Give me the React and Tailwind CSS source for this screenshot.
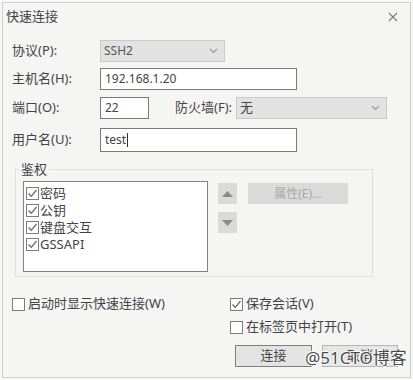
import React from 'react';

const font = { fontFamily: '"Noto Sans", "Noto Sans CJK SC", sans-serif' };

const Check = ({ checked, className = '' }) => (
  <span className={`flex h-[13px] w-[13px] shrink-0 items-center justify-center border border-[#7d7d7d] bg-white ${className}`}>
    {checked && (
      <svg width="11" height="11" viewBox="0 0 11 11">
        <path d="M1.5 5.5 L4.3 8.3 L9.5 2" fill="none" stroke="#6a6a6a" strokeWidth="1.3" />
      </svg>
    )}
  </span>
);

const Chevron = () => (
  <svg width="9" height="6" viewBox="0 0 9 6">
    <path d="M1 1 L4.5 4.5 L8 1" fill="none" stroke="#9a9a9a" strokeWidth="1.2" />
  </svg>
);

const Row = ({ label, children, className = '' }) => (
  <div className={`flex items-center pl-[9px] ${className}`}>
    <span className="w-[88px] text-[13px] text-[#444]">{label}</span>
    {children}
  </div>
);

const authItems = ['密码', '公钥', '键盘交互', 'GSSAPI'];

export default function App() {
  return (
    <div className="h-[380px] w-[413px] bg-[#f6f6f5] px-[2px] pt-[2px] text-[#333]" style={font}>
      <div className="flex h-[376px] flex-col border border-[#cfcfcf] bg-[#f5f5f4]">
        <div className="flex h-[28px] shrink-0 items-center justify-between pl-[3px] pr-[12px]">
          <span className="text-[13px] text-[#444]">快速连接</span>
          <svg width="10" height="10" viewBox="0 0 10 10">
            <path d="M1 1 L9 9 M9 1 L1 9" stroke="#7a7a7a" strokeWidth="1.1" />
          </svg>
        </div>

        <Row label="协议(P):" className="mt-[9px] h-[22px]">
          <div className="flex h-[22px] w-[125px] items-center justify-between border border-[#cacaca] bg-[#e2e2e2] pl-[3px] pr-[6px]">
            <span className="text-[12px] text-[#555]">SSH2</span>
            <Chevron />
          </div>
        </Row>

        <Row label="主机名(H):" className="mt-[6px] h-[22px]">
          <div className="flex h-[22px] w-[197px] items-center border border-[#7a7a7a] bg-white pl-[4px]">
            <span className="text-[12px] text-[#444]">192.168.1.20</span>
          </div>
        </Row>

        <Row label="端口(O):" className="mt-[7px] h-[22px]">
          <div className="flex h-[22px] w-[49px] items-center border border-[#7a7a7a] bg-white pl-[4px]">
            <span className="text-[12px] text-[#444]">22</span>
          </div>
          <span className="ml-[26px] w-[61px] text-[13px] text-[#444]">防火墙(F):</span>
          <div className="flex h-[22px] w-[151px] items-center justify-between border border-[#cacaca] bg-[#e2e2e2] pl-[3px] pr-[6px]">
            <span className="text-[13px] text-[#444]">无</span>
            <Chevron />
          </div>
        </Row>

        <Row label="用户名(U):" className="mt-[9px] h-[24px]">
          <div className="flex h-[24px] w-[197px] items-center border border-[#7a7a7a] bg-white pl-[4px]">
            <span className="text-[12px] text-[#444]">test</span>
            <span className="ml-[1px] h-[14px] w-[1px] bg-[#333]" />
          </div>
        </Row>

        <fieldset className="ml-[12px] mt-[8px] h-[117px] w-[358px] border border-[#dedede] px-0 pb-0">
          <legend className="ml-[3px] px-[2px] text-[13px] leading-[18px] text-[#444]">鉴权</legend>
          <div className="flex pl-[7px] pt-[3px]">
            <div className="flex h-[91px] w-[185px] flex-col border border-[#828282] bg-white pl-[2px] pt-[3px]">
              {authItems.map((item) => (
                <div key={item} className="flex h-[17px] items-center gap-[1px]">
                  <Check checked />
                  <span className="text-[13px] leading-none text-[#444]">{item}</span>
                </div>
              ))}
            </div>
            <div className="ml-[10px] flex flex-col pt-[2px]">
              <div className="flex h-[21px] w-[19px] items-center justify-center bg-[#dadada]">
                <svg width="11" height="6" viewBox="0 0 11 6"><path d="M0 6 L5.5 0 L11 6 Z" fill="#8a8a8a" /></svg>
              </div>
              <div className="mt-[8px] flex h-[21px] w-[19px] items-center justify-center bg-[#dadada]">
                <svg width="11" height="6" viewBox="0 0 11 6"><path d="M0 0 L5.5 6 L11 0 Z" fill="#8a8a8a" /></svg>
              </div>
            </div>
            <div className="ml-[11px] pt-[2px]">
              <div className="flex h-[21px] w-[100px] items-center justify-center bg-[#dadada] text-[12px] text-[#a8a8a8]">
                属性(E)...
              </div>
            </div>
          </div>
        </fieldset>

        <div className="mt-[20px] flex">
          <div className="flex w-[227px] items-start pl-[9px]">
            <div className="flex h-[14px] items-center gap-[3px]">
              <Check />
              <span className="text-[13px] text-[#444]">启动时显示快速连接(W)</span>
            </div>
          </div>
          <div className="flex flex-col">
            <div className="flex h-[14px] items-center gap-[3px]">
              <Check checked />
              <span className="text-[13px] text-[#444]">保存会话(V)</span>
            </div>
            <div className="mt-[9px] flex h-[14px] items-center gap-[3px]">
              <Check />
              <span className="text-[13px] text-[#444]">在标签页中打开(T)</span>
            </div>
          </div>
        </div>

        <div className="relative mt-[11px] flex pl-[232px]">
          <div className="flex h-[22px] w-[77px] items-center justify-center border border-[#7e7e7e] bg-[#e3e3e3] text-[13px] text-[#444]">
            连接
          </div>
          <div className="ml-[10px] flex h-[22px] w-[76px] items-center justify-center border border-[#b5b5b5] bg-[#e6e6e6] text-[13px] text-[#444]">
            取消
          </div>
          <span
            className="absolute left-[302px] top-[4px] text-[17px] leading-none text-[#4a4a4a]"
            style={{ textShadow: '1px 0 #fff, -1px 0 #fff, 0 1px #fff, 0 -1px #fff' }}
          >
            @51CTO博客
          </span>
        </div>
      </div>
    </div>
  );
}
